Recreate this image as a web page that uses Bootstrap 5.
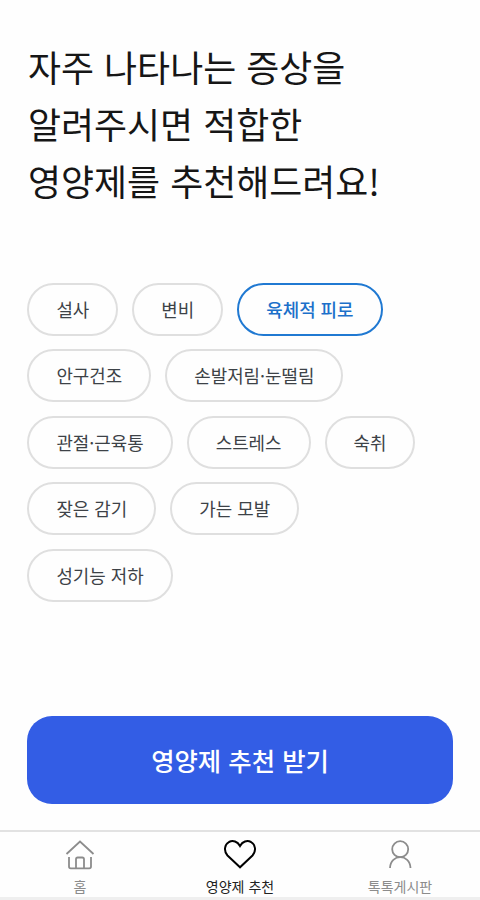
<!DOCTYPE html>
<html lang="ko">
<head>
<meta charset="utf-8">
<meta name="viewport" content="width=device-width, initial-scale=1">
<title>영양제 추천</title>
<link href="https://cdn.jsdelivr.net/npm/bootstrap@5.3.0/dist/css/bootstrap.min.css" rel="stylesheet">
<style>
body{font-family:"Noto Sans CJK KR",sans-serif;background:#fefefe;color:#161616}
.screen{height:900px;overflow:hidden}
.page-main{padding:38px 27px 26px}
.headline{font-size:35.9px;line-height:56.8px;font-weight:400;padding-left:1px;margin-bottom:74.6px}
.symptoms{width:410px;gap:13.5px 14px;padding-left:.4px}
.chip{height:53px;padding:0 27px 2px;border:2px solid #dfdfdf;border-radius:27px;background:#fefefe;font-size:17.9px;line-height:49px;color:#3d4247;white-space:nowrap}
.chip.active{border-color:#2079d2;color:#1c70ca;font-weight:500;background:#fefefe}
.cta,.cta:hover{height:88px;border:0;border-radius:25px;background:#335de5;color:#fff;font-size:25.4px;font-weight:500}
.tabs{height:70px;border-top:2px solid #e2e2e2;border-bottom:3px solid #efefef}
.tab{color:#8c8c8c;font-size:14px;line-height:20px;padding-top:4px}
.tab.active{color:#222}
.tab svg{width:36px;height:36px;fill:none;stroke:currentColor;stroke-width:1.8}
.tab.active svg{color:#000;stroke-width:2}
.tab span{margin-top:4px}
</style>
<script src="https://cdn.jsdelivr.net/npm/bootstrap@5.3.0/dist/js/bootstrap.bundle.min.js"></script>
</head>
<body>
<div class="screen d-flex flex-column">
  <main class="page-main flex-grow-1 d-flex flex-column">
    <h1 class="headline">자주 나타나는 증상을<br>알려주시면 적합한<br>영양제를 추천해드려요!</h1>
    <div class="symptoms d-flex flex-wrap">
      <button class="chip">설사</button>
      <button class="chip">변비</button>
      <button class="chip active">육체적 피로</button>
      <button class="chip">안구건조</button>
      <button class="chip">손발저림·눈떨림</button>
      <button class="chip">관절·근육통</button>
      <button class="chip">스트레스</button>
      <button class="chip">숙취</button>
      <button class="chip">잦은 감기</button>
      <button class="chip">가는 모발</button>
      <button class="chip">성기능 저하</button>
    </div>
    <button class="cta btn w-100 mt-auto">영양제 추천 받기</button>
  </main>
  <nav class="tabs row g-0 flex-shrink-0">
    <a class="tab col d-flex flex-column align-items-center text-decoration-none" href="#">
      <svg viewBox="0 0 36 36"><path d="M4.5 18 18 5.500 31.500 18M7 21v9.500q0 1.800 1.800 1.800H27.200q1.800 0 1.800-1.800V21M14 32.300v-9q0-1.800 1.800-1.800h4.400q1.800 0 1.800 1.800v9"/></svg>
      <span>홈</span>
    </a>
    <a class="tab active col d-flex flex-column align-items-center text-decoration-none" href="#">
      <svg viewBox="0 0 36 36"><path d="M18 31.300 5.500 19.500C1.500 15 2.500 8.500 7 6c4-2 8.500-.5 11 4 2.500-4.500 7-6 11-4 4.500 2.500 5.500 9 1.500 13.500Z"/></svg>
      <span>영양제 추천</span>
    </a>
    <a class="tab col d-flex flex-column align-items-center text-decoration-none" href="#">
      <svg viewBox="0 0 36 36"><circle cx="18.200" cy="13.200" r="8"/><path d="M8 32c.5-14.500 20-14.500 20.500 0"/></svg>
      <span>톡톡게시판</span>
    </a>
  </nav>
</div>
</body>
</html>
